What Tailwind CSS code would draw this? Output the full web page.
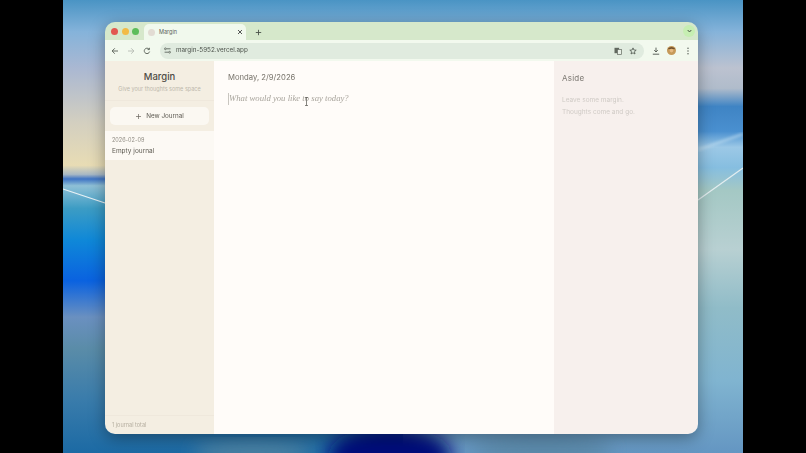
<!DOCTYPE html>
<html lang="en">
<head>
    <meta charset="UTF-8">
    <title>Margin</title>
    <script src="https://cdn.jsdelivr.net/npm/@tailwindcss/browser@4"></script>
</head>
<body class="bg-black h-[453px] w-[806px] overflow-hidden flex justify-center font-['Inter',sans-serif]">
    <!-- Desktop wallpaper -->
    <div class="relative w-[680px] h-[453px] overflow-hidden">
        <svg class="absolute inset-0" width="680" height="453" viewBox="0 0 680 453">
            <defs>
                <linearGradient id="wallLeft" x1="0" y1="0" x2="0" y2="1">
                    <stop offset="0" stop-color="#4a94c4"/>
                    <stop offset="0.07" stop-color="#85b3da"/>
                    <stop offset="0.15" stop-color="#aab8d2"/>
                    <stop offset="0.27" stop-color="#d3cfc0"/>
                    <stop offset="0.365" stop-color="#e8dcb4"/>
                    <stop offset="0.385" stop-color="#a8b8c4"/>
                    <stop offset="0.395" stop-color="#3f74c4"/>
                    <stop offset="0.41" stop-color="#8fc0d6"/>
                    <stop offset="0.46" stop-color="#3c9cc4"/>
                    <stop offset="0.53" stop-color="#0f88d8"/>
                    <stop offset="0.62" stop-color="#0a62e0"/>
                    <stop offset="0.70" stop-color="#6a90c0"/>
                    <stop offset="0.77" stop-color="#5a8ca8"/>
                    <stop offset="0.88" stop-color="#3a7cab"/>
                    <stop offset="1" stop-color="#1c6aa4"/>
                </linearGradient>
                <linearGradient id="wallRight" x1="0" y1="0" x2="0" y2="1">
                    <stop offset="0" stop-color="#4a94c4"/>
                    <stop offset="0.07" stop-color="#85b3da"/>
                    <stop offset="0.15" stop-color="#bcc2d0"/>
                    <stop offset="0.195" stop-color="#b0bccb"/>
                    <stop offset="0.235" stop-color="#3f84c4"/>
                    <stop offset="0.29" stop-color="#4a90d0"/>
                    <stop offset="0.325" stop-color="#9cc8e6"/>
                    <stop offset="0.37" stop-color="#86bee0"/>
                    <stop offset="0.42" stop-color="#a4c8c4"/>
                    <stop offset="0.55" stop-color="#b8d0d2"/>
                    <stop offset="0.68" stop-color="#90bcc8"/>
                    <stop offset="0.84" stop-color="#80b4d0"/>
                    <stop offset="1" stop-color="#6496c2"/>
                </linearGradient>
                <filter id="soft"><feGaussianBlur stdDeviation="9"/></filter>
                <filter id="softer"><feGaussianBlur stdDeviation="0.7"/></filter>
                <filter id="streak"><feGaussianBlur stdDeviation="1.6"/></filter>
            </defs>
            <rect x="0" y="0" width="340" height="453" fill="url(#wallLeft)"/>
            <rect x="340" y="0" width="340" height="453" fill="url(#wallRight)"/>
            <ellipse cx="327" cy="456" rx="62" ry="30" fill="#02107a" filter="url(#soft)"/>
            <ellipse cx="190" cy="452" rx="60" ry="12" fill="#4e82a2" filter="url(#soft)"/>
            <ellipse cx="480" cy="450" rx="70" ry="14" fill="#5a88a8" filter="url(#soft)"/>
            <path d="M0 189 L42 203" stroke="#e8f2f6" stroke-width="1.2" fill="none" filter="url(#softer)"/>
            <path d="M635 200 L680 168" stroke="#e4eef0" stroke-width="1.2" fill="none" filter="url(#softer)"/>
            <path d="M635 150 L680 134" stroke="#c4e0f2" stroke-width="2" fill="none" opacity="0.75" filter="url(#streak)"/>
        </svg>

        <!-- Browser window -->
        <div class="absolute left-[42px] top-[22px] w-[593px] h-[412px] flex flex-col rounded-[10px] overflow-hidden shadow-[0_4px_16px_rgba(0,0,0,0.35)] blur-[0.35px]">
            <!-- Tab strip -->
            <div class="h-[18px] shrink-0 bg-[#d6e8cb] flex items-end">
                <div class="w-[39px] h-full flex items-center gap-[3.5px] pl-[6px]">
                    <span class="w-[7px] h-[7px] rounded-full bg-[#e25850]"></span>
                    <span class="w-[7px] h-[7px] rounded-full bg-[#f2bb46]"></span>
                    <span class="w-[7px] h-[7px] rounded-full bg-[#5cbd5a]"></span>
                </div>
                <div class="w-[102px] h-[16px] bg-[#f1f9ed] rounded-t-[5px] flex items-center pl-[4px] pr-[3px]">
                    <span class="w-[7px] h-[7px] rounded-full bg-[#e2dcd3]"></span>
                    <span class="ml-[4px] text-[5.5px] text-[#5a5f58]">Margin</span>
                    <svg class="ml-auto" width="6" height="6" viewBox="0 0 6 6"><path d="M1 1 L5 5 M5 1 L1 5" stroke="#444" stroke-width="0.9"/></svg>
                </div>
                <svg class="ml-[9px] mb-[4.5px]" width="7" height="7" viewBox="0 0 7 7"><path d="M3.5 0.8 V6.2 M0.8 3.5 H6.2" stroke="#4b524a" stroke-width="0.9"/></svg>
                <div class="ml-auto mr-[3px] mb-[3px] w-[12px] h-[12px] rounded-full bg-[#c6eeb2] flex items-center justify-center">
                    <svg width="5" height="4" viewBox="0 0 5 4"><path d="M0.7 1 L2.5 3 L4.3 1" stroke="#3f4a3c" stroke-width="0.9" fill="none"/></svg>
                </div>
            </div>

            <!-- Toolbar -->
            <div class="h-[21px] shrink-0 bg-[#f2f9ee] flex items-center pl-[6px] pr-[6px]">
                <svg class="shrink-0" width="8" height="8" viewBox="0 0 8 8"><path d="M7 4 H1.2 M3.8 1.3 L1.1 4 L3.8 6.7" stroke="#555c54" stroke-width="0.9" fill="none"/></svg>
                <svg class="ml-[8px] shrink-0" width="8" height="8" viewBox="0 0 8 8"><path d="M1 4 H6.8 M4.2 1.3 L6.9 4 L4.2 6.7" stroke="#b4bab2" stroke-width="0.9" fill="none"/></svg>
                <svg class="ml-[8px] shrink-0" width="8" height="8" viewBox="0 0 8 8"><path d="M6.6 4.6 A2.7 2.7 0 1 1 5.9 2 M6.4 0.8 V2.6 H4.6" stroke="#555c54" stroke-width="0.9" fill="none"/></svg>
                <div class="ml-[9px] w-[484px] shrink-0 h-[16px] rounded-full bg-[#e0ebdf] flex items-center pl-[4px] pr-[7px]">
                    <svg width="7" height="7" viewBox="0 0 7 7"><path d="M2.5 1.8 H6.5 M0.6 5.2 H4.5" stroke="#4d544c" stroke-width="0.8"/><circle cx="1.4" cy="1.8" r="0.9" fill="none" stroke="#4d544c" stroke-width="0.7"/><circle cx="5.6" cy="5.2" r="0.9" fill="none" stroke="#4d544c" stroke-width="0.7"/></svg>
                    <span class="ml-[5px] text-[6.3px] text-[#4c524b]">margin-5952.vercel.app</span>
                    <svg class="ml-auto" width="8" height="8" viewBox="0 0 8 8"><rect x="0.5" y="0.8" width="4.6" height="5.4" fill="#61685f"/><rect x="3.4" y="2.4" width="4.1" height="5.2" fill="#e8efe6" stroke="#61685f" stroke-width="0.7"/></svg>
                    <svg class="ml-[7px]" width="8" height="8" viewBox="0 0 8 8"><path d="M4 0.9 L4.9 3 L7.2 3.2 L5.4 4.7 L6 7 L4 5.8 L2 7 L2.6 4.7 L0.8 3.2 L3.1 3 Z" stroke="#4d544c" stroke-width="0.8" fill="none"/></svg>
                </div>
                <svg class="ml-[8px] shrink-0" width="8" height="8" viewBox="0 0 8 8"><path d="M4 0.6 V4.8 M2.2 3.2 L4 5 L5.8 3.2 M0.8 7.2 H7.2" stroke="#4d544c" stroke-width="0.9" fill="none"/></svg>
                <svg class="ml-[7px] shrink-0" width="9" height="9" viewBox="0 0 9 9"><circle cx="4.5" cy="4.5" r="4.5" fill="#c69a5a"/><path d="M0.5 3.6 A4.5 4.5 0 0 1 8.5 3.6 L6.5 2.8 H2.5 Z" fill="#5a3d22"/><circle cx="4.5" cy="4.6" r="1.8" fill="#e6b981"/></svg>
                <svg class="ml-[10px] shrink-0" width="4" height="8" viewBox="0 0 4 8"><circle cx="2" cy="1.2" r="0.7" fill="#4d544c"/><circle cx="2" cy="4" r="0.7" fill="#4d544c"/><circle cx="2" cy="6.8" r="0.7" fill="#4d544c"/></svg>
            </div>

            <!-- Page -->
            <div class="flex-1 flex min-h-0">
                <!-- Sidebar -->
                <aside class="w-[109px] shrink-0 bg-[#f4eee2] flex flex-col">
                    <div class="h-[40px] shrink-0 border-b border-[#efe8dc] pt-[10px] text-center">
                        <h1 class="text-[9.5px] leading-[12px] font-medium text-[#4f4c45]">Margin</h1>
                        <p class="mt-[1.5px] text-[5.5px] leading-[8px] text-[#bdb8ac]">Give your thoughts some space</p>
                    </div>
                    <div class="px-[5px] pt-[6px] pb-[6px]">
                        <button class="w-full h-[18px] rounded-[5px] bg-[#fbf8f2] flex items-center justify-center gap-[4px] pt-[1px] text-[6.3px] text-[#5b5850]">
                            <svg width="7" height="7" viewBox="0 0 7 7"><path d="M3.5 1 V6 M1 3.5 H6" stroke="#6a665e" stroke-width="0.7"/></svg>
                            New Journal
                        </button>
                    </div>
                    <div class="h-[29px] bg-[#fcf9f4] pl-[7px] pt-[6px]">
                        <div class="text-[5.5px] leading-[7px] text-[#8f8b82]">2026-02-09</div>
                        <div class="mt-[2px] text-[6.5px] leading-[10px] text-[#5e5b53]">Empty journal</div>
                    </div>
                    <div class="mt-auto h-[19px] border-t border-[#efe8dc] pl-[7px] flex items-center text-[5.5px] text-[#b5aea0]">1 journal total</div>
                </aside>

                <!-- Editor -->
                <main class="relative w-[340px] shrink-0 bg-[#fffcf9] pl-[14px] pt-[11.5px]">
                    <div class="text-[7.7px] leading-[10px] text-[#77736a]">Monday, 2/9/2026</div>
                    <div class="mt-[10.5px] flex items-center h-[12px]">
                        <span class="w-px h-[12px] bg-[#c9c6c0]"></span>
                        <span class="font-['Liberation_Serif',serif] italic text-[8.7px] text-[#a8a49c]">What would you like to say today?</span>
                    </div>
                    <svg class="absolute left-[90px] top-[36px]" width="5" height="9" viewBox="0 0 5 9"><path d="M1 0.5 H4 M2.5 0.5 V8.5 M1 8.5 H4" stroke="#55534e" stroke-width="0.7" fill="none"/></svg>
                </main>

                <!-- Aside -->
                <section class="flex-1 bg-[#f7f0ed] pl-[8px] pt-[11.5px]">
                    <div class="text-[8px] leading-[10px] tracking-[0.2px] text-[#7c7872]">Aside</div>
                    <p class="mt-[12px] text-[6.5px] leading-[10px] text-[#d0cbc6]">Leave some margin.</p>
                    <p class="mt-[2.5px] text-[6.5px] leading-[10px] text-[#d0cbc6]">Thoughts come and go.</p>
                </section>
            </div>
        </div>
    </div>
</body>
</html>
